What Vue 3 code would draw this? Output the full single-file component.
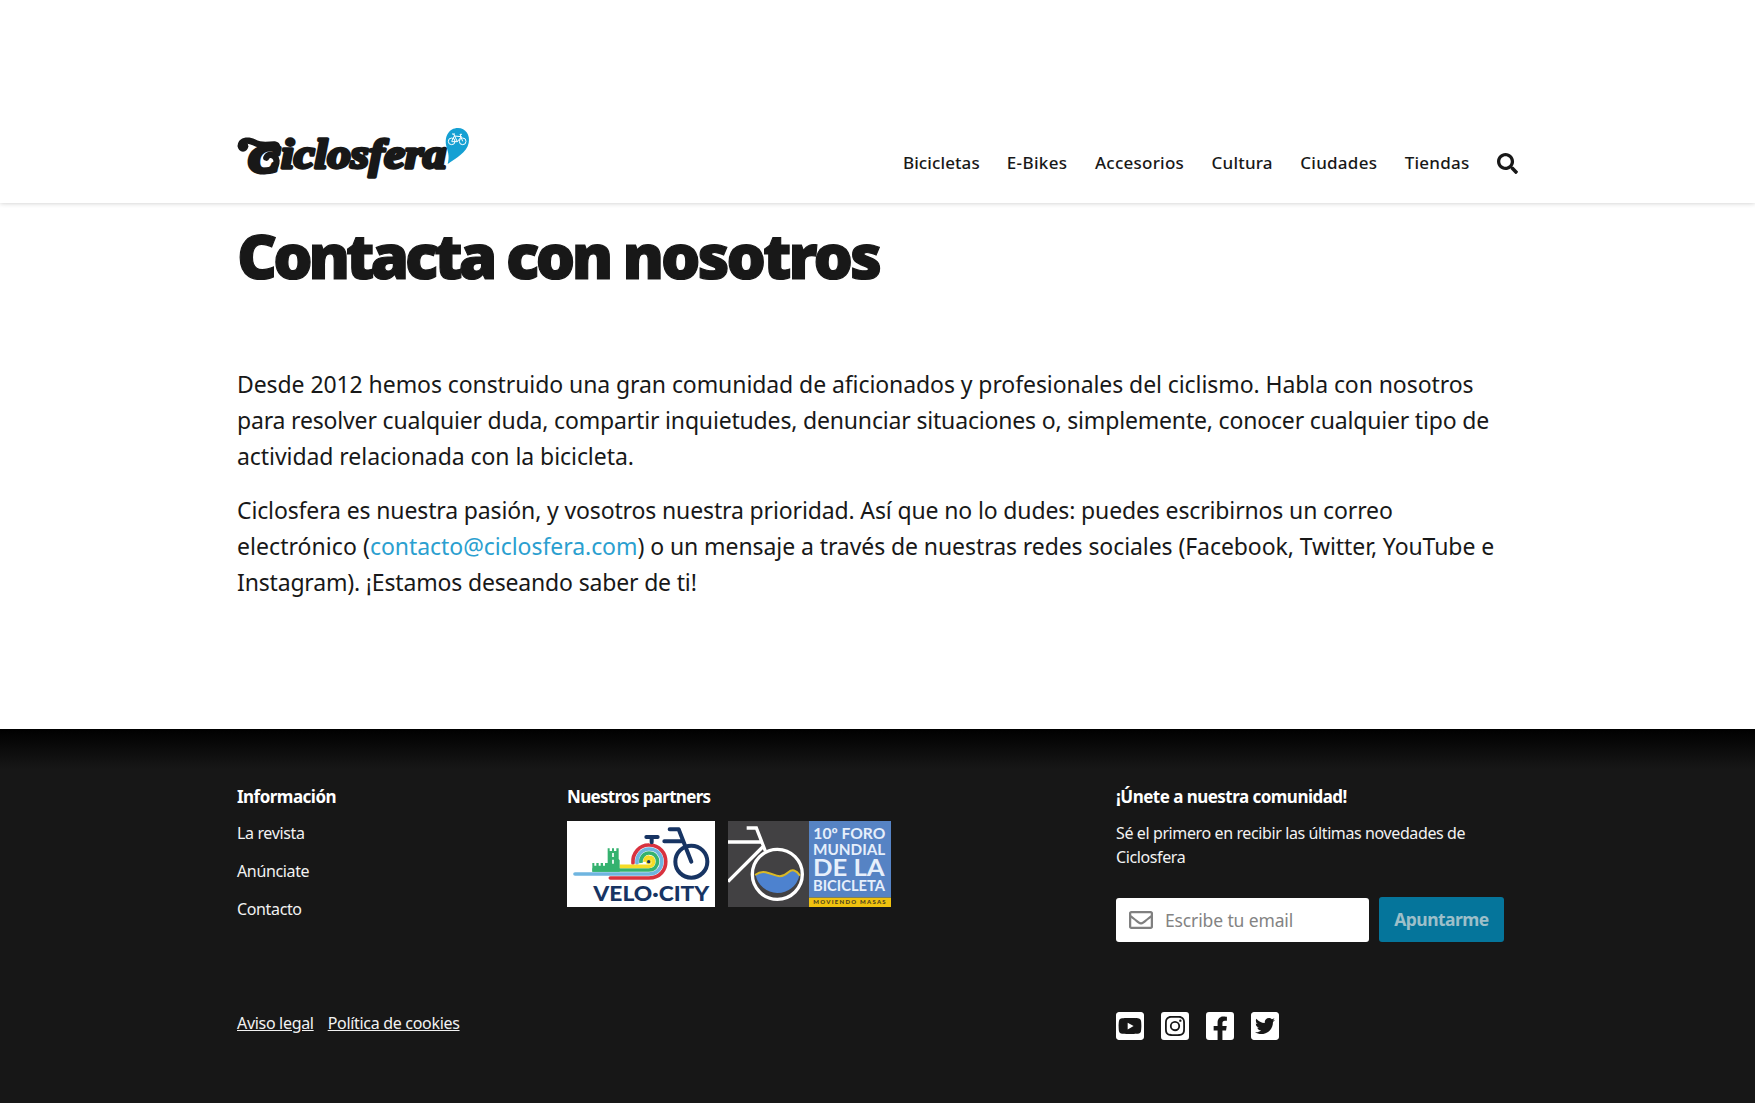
<script setup>
const menu = [
  { label: 'Bicicletas', cls: 'n1' },
  { label: 'E-Bikes', cls: 'n2' },
  { label: 'Accesorios', cls: 'n3' },
  { label: 'Cultura', cls: 'n4' },
  { label: 'Ciudades', cls: 'n5' },
  { label: 'Tiendas', cls: 'n6' },
]
const info = ['La revista', 'Anúnciate', 'Contacto']
const social = [
  { name: 'YouTube', d: 'M186.8 202.1l95.2 54.1-95.2 54.1V202.1zM448 80v352c0 26.5-21.5 48-48 48H48c-26.5 0-48-21.5-48-48V80c0-26.5 21.5-48 48-48h352c26.5 0 48 21.5 48 48zm-42 176.3s0-59.6-7.6-88.2c-4.2-15.8-16.5-28.2-32.2-32.4C337.9 128 224 128 224 128s-113.9 0-142.2 7.7c-15.7 4.2-28 16.6-32.2 32.4-7.6 28.5-7.6 88.2-7.6 88.2s0 59.6 7.6 88.2c4.2 15.8 16.5 27.7 32.2 31.9C110.1 384 224 384 224 384s113.9 0 142.2-7.7c15.7-4.2 28-16.1 32.2-31.9 7.6-28.5 7.6-88.1 7.6-88.1z' },
  { name: 'Instagram', d: 'M224 202.66A53.34 53.34 0 1 0 277.36 256 53.38 53.38 0 0 0 224 202.66Zm124.71-41a54 54 0 0 0-30.41-30.41c-21-8.29-71-6.43-94.3-6.43s-73.25-1.93-94.31 6.43a54 54 0 0 0-30.41 30.41c-8.28 21-6.43 71.05-6.43 94.33S91 329.26 99.32 350.33a54 54 0 0 0 30.41 30.41c21 8.29 71 6.43 94.31 6.43s73.24 1.93 94.3-6.43a54 54 0 0 0 30.41-30.41c8.35-21 6.43-71.05 6.43-94.33S357.1 182.74 348.75 161.67ZM224 338a82 82 0 1 1 82-82A81.9 81.9 0 0 1 224 338Zm85.38-148.3a19.14 19.14 0 1 1 19.13-19.14A19.1 19.1 0 0 1 309.42 189.74ZM400 32H48A48 48 0 0 0 0 80V432a48 48 0 0 0 48 48H400a48 48 0 0 0 48-48V80A48 48 0 0 0 400 32ZM382.88 322c-1.29 25.63-7.14 48.34-25.85 67s-41.4 24.63-67 25.85c-26.41 1.49-105.59 1.49-132 0-25.63-1.29-48.26-7.15-67-25.85s-24.63-41.42-25.85-67c-1.49-26.42-1.49-105.61 0-132 1.29-25.63 7.07-48.34 25.85-67s41.47-24.56 67-25.78c26.41-1.49 105.59-1.49 132 0 25.63 1.29 48.33 7.15 67 25.85s24.63 41.42 25.85 67.05C384.37 216.44 384.37 295.56 382.88 322Z' },
  { name: 'Facebook', d: 'M400 32H48A48 48 0 0 0 0 80v352a48 48 0 0 0 48 48h137.250V327.69h-63V256h63v-54.64c0-62.15 37-96.48 93.67-96.48 27.14 0 55.52 4.84 55.52 4.84v61h-31.27c-30.81 0-40.42 19.12-40.42 38.73V256h68.78l-11 71.69h-57.78V480H400a48 48 0 0 0 48-48V80a48 48 0 0 0-48-48z' },
  { name: 'Twitter', d: 'M400 32H48C21.5 32 0 53.5 0 80v352c0 26.5 21.5 48 48 48h352c26.5 0 48-21.5 48-48V80c0-26.5-21.5-48-48-48zm-48.9 158.8c.2 2.8.2 5.7.2 8.5 0 86.7-66 186.6-186.6 186.6-37.2 0-71.7-10.8-100.7-29.4 5.3.6 10.4.8 15.8.8 30.7 0 58.9-10.4 81.4-28-28.8-.6-53-19.5-61.3-45.5 10.1 1.5 19.2 1.5 29.6-1.2-30-6.1-52.5-32.5-52.5-64.4v-.8c8.7 4.9 18.9 7.9 29.6 8.3a65.447 65.447 0 0 1-29.2-54.6c0-12.2 3.2-23.4 8.9-33.1 32.3 39.8 80.8 65.8 135.2 68.6-9.3-44.5 24-80.6 64-80.6 18.9 0 35.9 7.9 47.9 20.7 14.8-2.8 29-8.3 41.6-15.8-4.9 15.2-15.2 28-28.8 36.1 13.2-1.4 26-5.1 37.8-10.2-8.9 13.1-20.1 24.7-32.9 34z' },
]
</script>

<template>
  <div class="page">
    <header class="header">
      <div class="wrap bar">
        <svg class="logo" viewBox="36 36 702 156" role="img" aria-label="Ciclosfera">
          <g class="ink">
            <text class="word cap" x="72" y="170" font-size="112" textLength="88" lengthAdjust="spacingAndGlyphs">C</text>
            <text class="word" x="168" y="160" font-size="125" textLength="496" lengthAdjust="spacingAndGlyphs">iclosfera</text>
            <circle cx="54" cy="94" r="16" />
            <path d="M38 92C39 66 70 62 90 73C112 85 134 78 150 79C172 82 170 108 146 107C116 106 92 94 74 88C62 84 60 88 68 96L50 106Z" />
            <path class="curl" d="M118 168C150 168 164 140 148 124C140 117 128 118 124 128" />
          </g>
          <path class="pin" d="M668 147C673 130 671 116 665 97C656 65 672 39 699 39C722 39 736 60 731 84C725 113 694 129 668 147Z" />
          <g class="bike">
            <circle cx="680" cy="79" r="10" />
            <circle cx="713" cy="79" r="10" />
            <path d="M680 79L688 63L709 65L697 80H680M686 57L697 80M681 57H690M713 79L705 58H711" />
          </g>
        </svg>
        <nav class="nav">
          <a v-for="m in menu" :key="m.label" :class="m.cls">{{ m.label }}</a>
          <svg class="search" viewBox="0 0 512 512"><path d="M505 442.7L405.3 343c-4.5-4.5-10.6-7-17-7H372c27.6-35.3 44-79.7 44-128C416 93.1 322.9 0 208 0S0 93.1 0 208s93.1 208 208 208c48.3 0 92.7-16.4 128-44v16.3c0 6.4 2.5 12.5 7 17l99.7 99.7c9.4 9.4 24.6 9.4 33.9 0l28.3-28.3c9.4-9.4 9.4-24.6.1-34zM208 336c-70.7 0-128-57.2-128-128 0-70.7 57.2-128 128-128 70.7 0 128 57.2 128 128 0 70.7-57.2 128-128 128z" /></svg>
        </nav>
      </div>
    </header>

    <main class="wrap main">
      <h1><span class="w1">Contacta</span> <span class="w2">con</span> <span class="w3">nosotros</span></h1>
      <p>
        <span class="l1">Desde 2012 hemos construido una gran comunidad de aficionados y profesionales del ciclismo. Habla con nosotros</span>
        <span class="l2">para resolver cualquier duda, compartir inquietudes, denunciar situaciones o, simplemente, conocer cualquier tipo de</span>
        <span class="l3">actividad relacionada con la bicicleta.</span>
      </p>
      <p>
        <span class="l4">Ciclosfera es nuestra pasión, y vosotros nuestra prioridad. Así que no lo dudes: puedes escribirnos un correo</span>
        <span class="l5"><span class="open">electrónico (</span><a class="mail">contacto@ciclosfera.com</a>) o un mensaje a través de nuestras redes sociales (Facebook, Twitter, YouTube e</span>
        <span class="l6">Instagram). ¡Estamos deseando saber de ti!</span>
      </p>
    </main>

    <footer class="footer">
      <div class="wrap cols">
        <section class="c1">
          <h4 class="h-info">Información</h4>
          <ul>
            <li v-for="i in info" :key="i">{{ i }}</li>
          </ul>
        </section>

        <section class="c2">
          <h4 class="h-part">Nuestros partners</h4>
          <div class="partners">
            <svg class="velo" viewBox="0 0 444 258">
              <rect width="444" height="258" fill="#fff" />
              <g fill="none" stroke-width="11">
                <path d="M198 126A47 50 0 0 1 246 72C312 72 314 171 246 171H130" stroke="#d8323f" stroke-linecap="round" />
                <path d="M210 126A36 38 0 0 1 246 84C297 84 297 159 246 159H24" stroke="#6fb5e0" stroke-linecap="round" />
                <path d="M222 126A24 26 0 0 1 246 96C280 96 280 147 246 147H76" stroke="#35b26f" />
                <path d="M234 122A11 12 0 0 1 246 108C264 108 264 136 246 136H158" stroke="#f5dc27" />
              </g>
              <path d="M76 152V126h6v8h6v-8h7v8h6v-8h7v8h6v-8h8V82h6v8h7v-8h6v8h7v-8h7v32l3 4v34z" fill="#35b26f" />
              <path d="M138 96v12M138 116v12" stroke="#fff" stroke-width="5" />
              <circle cx="245" cy="121" r="9" fill="#f5dc27" /><circle cx="245" cy="122" r="5" fill="#173463" />
              <g fill="none" stroke="#173463" stroke-width="12" stroke-linecap="round" stroke-linejoin="round">
                <path d="M238 48H272M254 50V64M308 25H335L373 122M292 61H349" />
                <circle cx="373" cy="122" r="48" />
              </g>
              <text class="brand" x="79" y="239" font-size="65" textLength="348" lengthAdjust="spacingAndGlyphs">VELO·CITY</text>
            </svg>
            <svg class="foro" viewBox="0 0 489 258">
              <rect width="243" height="258" fill="#424143" />
              <rect x="243" width="246" height="230" fill="#5683c4" />
              <rect x="243" y="230" width="246" height="28" fill="#f0c20f" />
              <path d="M83 162Q98 150 113 154T146 164T181 154T214 164A67 67 0 0 1 83 162Z" fill="#4d82cf" />
              <path d="M81 162Q98 150 113 154T146 164T181 154T216 164" fill="none" stroke="#d9b825" stroke-width="6" />
              <g fill="none" stroke="#fff" stroke-width="10">
                <circle cx="148" cy="160" r="75" />
                <path d="M56 21H85L112 90M0 63H101M104 78L0 182" />
              </g>
              <g class="poster">
                <text x="256" y="55" font-size="46" textLength="216" lengthAdjust="spacingAndGlyphs">10º FORO</text>
                <text x="255" y="101" font-size="46" textLength="217" lengthAdjust="spacingAndGlyphs">MUNDIAL</text>
                <text x="255" y="164" font-size="68" textLength="215" lengthAdjust="spacingAndGlyphs">DE LA</text>
                <text x="255" y="209" font-size="43" textLength="216" lengthAdjust="spacingAndGlyphs">BICICLETA</text>
              </g>
              <text class="tag" x="256" y="250" font-size="18" textLength="217" lengthAdjust="spacing">MOVIENDO MASAS</text>
            </svg>
          </div>
        </section>

        <section class="c3">
          <h4 class="h-join">¡Únete a nuestra comunidad!</h4>
          <p class="lead">Sé el primero en recibir las últimas novedades de Ciclosfera</p>
          <form class="form">
            <label class="field">
              <svg viewBox="0 0 512 512"><path d="M464 64H48C21.49 64 0 85.49 0 112v288c0 26.51 21.49 48 48 48h416c26.51 0 48-21.49 48-48V112c0-26.51-21.49-48-48-48zm0 48v40.805c-22.422 18.259-58.168 46.651-134.587 106.49-16.841 13.247-50.201 45.072-73.413 44.701-23.208.375-56.579-31.459-73.413-44.701C106.18 199.465 70.425 171.067 48 152.805V112h416zM48 400V214.398c22.914 18.251 55.409 43.862 104.938 82.646 21.857 17.205 60.134 55.186 103.062 54.955 42.717.231 80.509-37.199 103.053-54.947 49.528-38.783 82.032-64.401 104.947-82.653V400H48z" /></svg>
              <span>Escribe tu email</span>
            </label>
            <span class="btn">Apuntarme</span>
          </form>
        </section>
      </div>

      <div class="wrap bottom">
        <div class="legal"><a class="a1">Aviso legal</a><a class="a2">Política de cookies</a></div>
        <div class="social">
          <svg v-for="s in social" :key="s.name" viewBox="0 32 448 448" :aria-label="s.name"><path :d="s.d" /></svg>
        </div>
      </div>
    </footer>
  </div>
</template>

<style>
body { margin: 0; background: #fff; }
</style>

<style scoped>
.page { height: 1103px; overflow: hidden; display: flex; flex-direction: column; font-family: "Noto Sans", sans-serif; color: #181818; }
.wrap { width: 1281px; margin: 0 auto; box-sizing: border-box; }
h1, h4, p, ul { margin: 0; padding: 0; }

.header { flex: none; height: 203px; box-sizing: border-box; padding-top: 127px; box-shadow: 0 0 5px rgba(0, 0, 0, .22); }
.bar { display: flex; justify-content: space-between; align-items: flex-start; }
.logo { width: 234px; height: 52px; }
.ink { fill: #181818; }
.word { font-family: "Liberation Serif", serif; font-weight: 700; font-style: italic; stroke: #181818; stroke-width: 10; stroke-linejoin: round; }
.cap { stroke-width: 15; }
.curl { fill: none; stroke: #181818; stroke-width: 19; stroke-linecap: round; }
.pin { fill: #15a0d3; }
.bike { fill: none; stroke: #fff; stroke-width: 3; }
.nav { display: flex; align-items: center; height: 24px; margin-top: 24px; font-size: 17px; font-weight: 500; line-height: 24px; white-space: nowrap; }
.nav a { margin-right: 27.5px; }
.nav .n1 { letter-spacing: .1px; margin-right: 27px; }
.n2 { letter-spacing: .35px; }
.n3 { letter-spacing: .25px; }
.n4 { letter-spacing: .2px; }
.n5 { letter-spacing: .25px; }
.n6 { letter-spacing: .25px; }
.search { width: 21px; height: 21px; fill: #181818; }

.main { flex: none; height: 526px; padding-top: 16px; box-sizing: border-box; }
h1 { height: 72px; margin-bottom: 75px; font-size: 62px; line-height: 72px; font-weight: 900; letter-spacing: -3.3px; white-space: nowrap; -webkit-text-stroke: 1.2px #181818; }
.w1 { letter-spacing: -4.1px; }
.w2 { letter-spacing: -3.6px; }
.w3 { letter-spacing: -3px; }
.main p { margin-bottom: 18px; font-size: 23px; line-height: 36px; }
.main p > span { display: block; white-space: nowrap; }
.l1 { letter-spacing: -.08px; }
.l2 { letter-spacing: -.175px; }
.l3 { letter-spacing: -.06px; }
.l4 { letter-spacing: -.135px; }
.l5 { letter-spacing: -.08px; }
.l6 { letter-spacing: -.17px; }
.open { letter-spacing: .06px; }
.mail { color: #2b9fd0; letter-spacing: -.05px; }

.footer { flex: 1; padding-top: 56px; box-sizing: border-box; background: linear-gradient(#000, #171717 40px); color: #f2f2f2; font-size: 16px; line-height: 24px; }
.cols { display: flex; height: 226px; }
h4 { margin-bottom: 12px; font-size: 17px; line-height: 24px; font-weight: 700; color: #fff; white-space: nowrap; }
.h-info { letter-spacing: -.52px; }
.h-part { letter-spacing: -.68px; }
.h-join { letter-spacing: -.53px; }
.c1 { width: 330px; }
.c2 { width: 549px; }
.c3 { width: 390px; }
ul { list-style: none; letter-spacing: -.36px; }
li { margin-bottom: 14px; }
.partners { display: flex; gap: 13.5px; margin-left: -.5px; }
.velo { width: 148px; height: 86px; }
.foro { width: 163px; height: 86px; }
.brand { font-family: Lato, sans-serif; font-weight: 900; fill: #173463; }
.poster { font-family: Lato, sans-serif; font-weight: 700; fill: #e6effb; }
.tag { font-family: Lato, sans-serif; font-weight: 900; fill: #4d4420; }
.lead { letter-spacing: -.39px; }
.form { display: flex; align-items: center; gap: 10px; margin-top: 28px; font-size: 17.5px; }
.field { display: flex; align-items: center; gap: 12px; width: 253px; height: 44px; padding-left: 13px; box-sizing: border-box; border-radius: 3px; background: #fff; color: #838383; letter-spacing: -.13px; }
.field svg { width: 24px; height: 24px; fill: #808080; }
.btn { width: 125px; height: 45px; border-radius: 3px; background: #05759b; color: #9dbfc9; font-weight: 700; line-height: 45px; text-align: center; letter-spacing: -.55px; }
.bottom { display: flex; height: 30px; }
.legal { width: 878.5px; }
.legal a { text-decoration: underline; margin-right: 14px; letter-spacing: -.31px; }
.social { display: flex; gap: 17px; }
.social svg { width: 28px; height: 28px; fill: #fff; margin-top: .5px; }
</style>
